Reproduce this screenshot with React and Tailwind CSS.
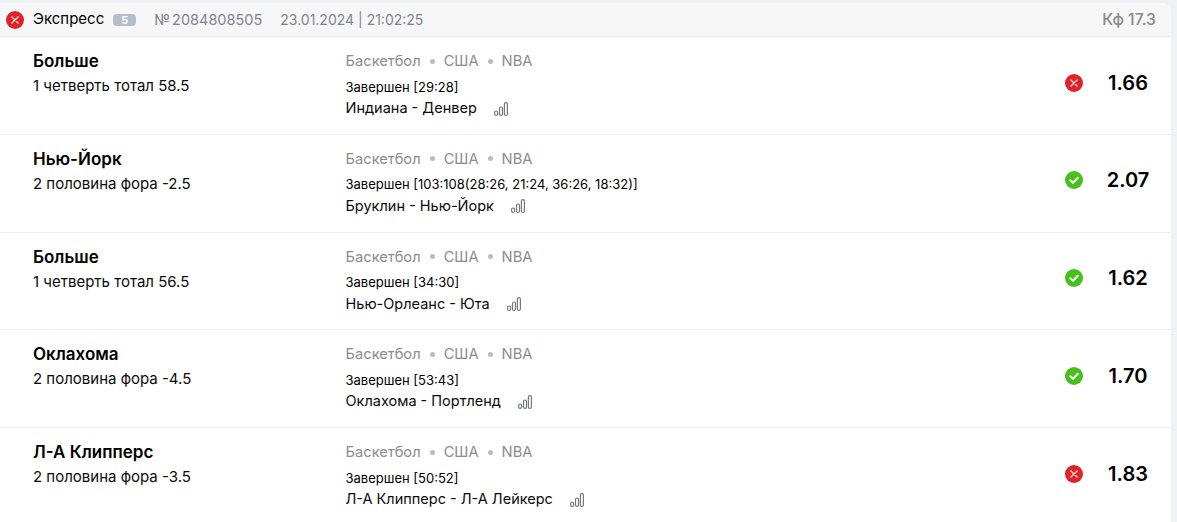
const bets = [
  { title: 'Больше', market: '1 четверть тотал 58.5', score: 'Завершен [29:28]', match: 'Индиана - Денвер', won: false, odds: '1.66' },
  { title: 'Нью-Йорк', market: '2 половина фора -2.5', score: 'Завершен [103:108(28:26, 21:24, 36:26, 18:32)]', match: 'Бруклин - Нью-Йорк', won: true, odds: '2.07' },
  { title: 'Больше', market: '1 четверть тотал 56.5', score: 'Завершен [34:30]', match: 'Нью-Орлеанс - Юта', won: true, odds: '1.62' },
  { title: 'Оклахома', market: '2 половина фора -4.5', score: 'Завершен [53:43]', match: 'Оклахома - Портленд', won: true, odds: '1.70' },
  { title: 'Л-А Клипперс', market: '2 половина фора -3.5', score: 'Завершен [50:52]', match: 'Л-А Клипперс - Л-А Лейкерс', won: false, odds: '1.83' },
];

const StatusIcon = ({ won }) => (
  <svg width="18" height="18" viewBox="0 0 18 18" className="shrink-0">
    <circle cx="9" cy="9" r="9" fill={won ? '#46c11b' : '#e32228'} />
    {won ? (
      <path d="M5.3 9.3 L8 11.8 L12.8 6.8" fill="none" stroke="#fff" strokeWidth="2" strokeLinecap="round" strokeLinejoin="round" />
    ) : (
      <path d="M5.8 5.8 L12.2 12.2 M12.2 5.8 L5.8 12.2" fill="none" stroke="#fff" strokeWidth="1.2" strokeLinecap="round" />
    )}
  </svg>
);

const StatsIcon = () => (
  <svg width="14" height="14" viewBox="0 0 14 14" className="shrink-0 ml-[17px] mt-[1px]">
    <g fill="none" stroke="#747884" strokeWidth="1.2">
      <rect x="0.6" y="9" width="3" height="4.4" rx="1.5" />
      <rect x="5.5" y="5" width="3" height="8.4" rx="1.5" />
      <rect x="10.4" y="0.6" width="3" height="12.8" rx="1.5" />
    </g>
  </svg>
);

const Dot = () => <span className="w-[5px] h-[5px] rounded-full bg-[#b9bcc4] mx-[9px]"></span>;

const BetRow = ({ bet }) => (
  <div className="h-[97.75px] flex border-b border-[#eceef1] last:border-b-0 pl-[33px] pr-[18px]">
    <div className="w-[312.5px] pt-[14px] shrink-0">
      <div className="text-[17px] leading-[20px] font-semibold text-black">{bet.title}</div>
      <div className="text-[15px] leading-[20px] mt-[5px] text-[#0b0b0b]">{bet.market}</div>
    </div>
    <div className="flex-1 pt-[15px]">
      <div className="flex items-center text-[14.7px] leading-[18px] text-[#8c8c8c]">
        <span>Баскетбол</span>
        <Dot />
        <span>США</span>
        <Dot />
        <span>NBA</span>
      </div>
      <div className="text-[13px] leading-[16px] mt-[8.5px] text-black">{bet.score}</div>
      <div className="flex items-center text-[14.5px] leading-[20px] mt-[3.5px] text-[#0b0b0b]">
        <span>{bet.match}</span>
        <StatsIcon />
      </div>
    </div>
    <div className="flex items-center self-start mt-[35.5px]">
      <StatusIcon won={bet.won} />
      <div className="w-[70px] text-center pl-[20px] text-[20px] leading-[20px] font-semibold text-black">{bet.odds}</div>
    </div>
  </div>
);

export default function App() {
  return (
    <div className="w-[1177px] h-[522px] overflow-hidden bg-[#eef1f6] pt-[3px] pr-[6px] font-['Inter','Noto_Sans',sans-serif]">
      <div className="bg-white rounded-tr-[10px] h-full">
        <div className="h-[34px] flex items-center bg-[#f7f7f8] border-b border-[#e3e6ec] rounded-tr-[10px] pl-[6px] pr-[15px]">
          <StatusIcon won={false} />
          <span className="ml-[9px] text-[15px] text-black">Экспресс</span>
          <span className="ml-[9px] w-[23px] h-[12px] rounded-[4px] bg-[#b6bdca] text-white text-[11px] leading-[12px] font-bold text-center">5</span>
          <span className="ml-[18px] text-[14.5px] text-[#7f8491]">№<span className="ml-[2px]">2084808505</span></span>
          <span className="ml-[18px] text-[14px] text-[#7f8491]">23.01.2024 | 21:02:25</span>
          <span className="ml-auto text-[15.8px] font-medium text-[#8a8a8a]">Кф 17.3</span>
        </div>
        {bets.map((bet) => (
          <BetRow key={bet.match} bet={bet} />
        ))}
      </div>
    </div>
  );
}
